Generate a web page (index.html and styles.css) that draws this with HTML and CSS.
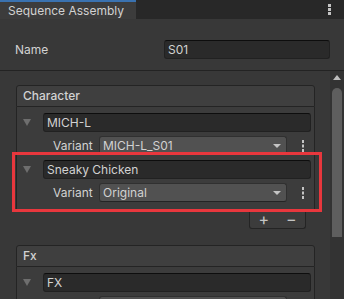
FILE: index.html
```html
<!DOCTYPE html>
<html lang="en">
<head>
    <meta charset="UTF-8">
    <title>Sequence Assembly</title>
    <link rel="stylesheet" href="styles.css">
</head>
<body>
    <div class="tabbar">
        <div class="tab">Sequence Assembly</div>
        <svg class="tab-menu" width="4" height="11" viewBox="0 0 4 11"><rect x="0" y="0" width="3" height="3"/><rect x="0" y="4" width="3" height="3"/><rect x="0" y="8" width="3" height="3"/></svg>
    </div>

    <div class="name-row">
        <span class="label">Name</span>
        <div class="field name-field">S01</div>
    </div>

    <div class="scroll">
        <div class="content">
            <div class="list">
                <div class="list-header">Character</div>
                <div class="list-body">
                    <div class="element">
                        <div class="fold"></div>
                        <div class="fields">
                            <div class="field">MICH-L</div>
                            <div class="variant-row">
                                <span class="label variant-label">Variant</span>
                                <div class="dropdown">MICH-L_S01<span class="arrow"></span></div>
                                <div class="more"><svg width="2" height="12" viewBox="0 0 2 12"><rect y="0" width="2" height="3"/><rect y="4.5" width="2" height="3"/><rect y="9" width="2" height="3"/></svg></div>
                            </div>
                        </div>
                    </div>
                    <div class="element highlighted">
                        <div class="fold"></div>
                        <div class="fields">
                            <div class="field">Sneaky Chicken</div>
                            <div class="variant-row">
                                <span class="label variant-label">Variant</span>
                                <div class="dropdown">Original<span class="arrow"></span></div>
                                <div class="more"><svg width="2" height="12" viewBox="0 0 2 12"><rect y="0" width="2" height="3"/><rect y="4.5" width="2" height="3"/><rect y="9" width="2" height="3"/></svg></div>
                            </div>
                        </div>
                    </div>
                </div>
                <div class="list-footer">
                    <span class="btn">+</span>
                    <span class="btn">&minus;</span>
                </div>
            </div>

            <div class="list">
                <div class="list-header">Fx</div>
                <div class="list-body">
                    <div class="element">
                        <div class="fold"></div>
                        <div class="fields">
                            <div class="field">FX</div>
                            <!-- row below is cut off by the window edge -->
                            <div class="variant-row">
                                <span class="label variant-label"></span>
                                <div class="dropdown"></div>
                                <div class="more"></div>
                            </div>
                        </div>
                    </div>
                </div>
            </div>
        </div>

        <div class="scrollbar">
            <div class="scroll-arrow"></div>
            <div class="thumb"></div>
        </div>
    </div>
</body>
</html>
```

FILE: styles.css
```css
body {
    margin: 0;
    width: 344px;
    height: 299px;
    overflow: hidden;
    background: #383838;
    color: #d2d2d2;
    font-family: 'Inter', 'Noto Sans', sans-serif;
    font-size: 12px;
}

.tabbar {
    height: 19px;
    background: #282828;
    display: flex;
    align-items: stretch;
    justify-content: space-between;
}

.tab {
    width: 136px;
    padding-left: 8px;
    box-sizing: border-box;
    background: #3c3c3c;
    border-top: 2px solid #3a72b0;
    line-height: 17px;
}

.tab-menu {
    fill: #c4c4c4;
    margin: 4px 12px 0 0;
}

.name-row {
    display: flex;
    align-items: center;
    padding: 21px 14px 11px 15px;
    border-bottom: 1px solid #232323;
}

.name-row .label {
    width: 149px;
}

.field {
    height: 19px;
    box-sizing: border-box;
    background: #2a2a2a;
    border: 1px solid #212121;
    border-top-color: #0d0d0d;
    border-radius: 3px;
    padding-left: 3px;
    line-height: 17px;
    white-space: nowrap;
}

.name-field {
    flex: 1;
}

.scroll {
    display: flex;
    height: 228px;
}

.content {
    flex: 1;
    padding: 14px 15px 0 16px;
    overflow: hidden;
}

.list {
    margin-bottom: 16px;
}

.list-header {
    height: 22px;
    box-sizing: border-box;
    background: #3f3f3f;
    border: 1px solid #242424;
    border-radius: 3px 3px 0 0;
    padding-left: 6px;
    line-height: 20px;
    font-weight: 500;
}

.list-body {
    background: #3c3c3c;
    border: 1px solid #242424;
    border-top: none;
    padding: 6px 3px 7px 0;
    display: flex;
    flex-direction: column;
    gap: 5px;
}

.element {
    display: flex;
    position: relative;
}

.highlighted::after {
    content: '';
    position: absolute;
    top: -8px;
    bottom: -10px;
    left: -5px;
    right: -11px;
    border: 3px solid #e8373d;
}

.fold {
    width: 26px;
    position: relative;
}

.fold::before {
    content: '';
    position: absolute;
    left: 6px;
    top: 6px;
    border-left: 4px solid transparent;
    border-right: 4px solid transparent;
    border-top: 7px solid #6e6e6e;
}

.fields {
    flex: 1;
    display: flex;
    flex-direction: column;
    gap: 4px;
}

.variant-row {
    display: flex;
    align-items: center;
    padding-left: 10px;
}

.variant-label {
    width: 46px;
}

.dropdown {
    flex: 1;
    height: 19px;
    box-sizing: border-box;
    background: #515151;
    border: 1px solid #303030;
    border-bottom-color: #242424;
    border-radius: 3px;
    padding-left: 3px;
    line-height: 17px;
    position: relative;
}

.arrow {
    position: absolute;
    right: 5px;
    top: 7px;
    border-left: 4px solid transparent;
    border-right: 4px solid transparent;
    border-top: 4px solid #c4c4c4;
}

.more {
    width: 24px;
    display: flex;
    justify-content: flex-end;
    padding-right: 7px;
    box-sizing: border-box;
    fill: #c4c4c4;
}

.list-footer {
    width: 57px;
    height: 19px;
    box-sizing: border-box;
    margin: 0 9px 0 auto;
    background: #3c3c3c;
    border: 1px solid #242424;
    border-top: none;
    border-radius: 0 0 3px 3px;
    display: flex;
    justify-content: space-around;
    align-items: center;
    font-size: 16px;
    color: #c4c4c4;
}

.scrollbar {
    width: 14px;
    background: #333333;
    display: flex;
    flex-direction: column;
    align-items: center;
}

.scroll-arrow {
    margin-top: 4px;
    border-left: 4px solid transparent;
    border-right: 4px solid transparent;
    border-bottom: 5px solid #bdbdbd;
}

.thumb {
    margin-top: 8px;
    width: 10px;
    height: 149px;
    background: #5e5e5e;
    border-radius: 5px 5px 0 0;
}
```
